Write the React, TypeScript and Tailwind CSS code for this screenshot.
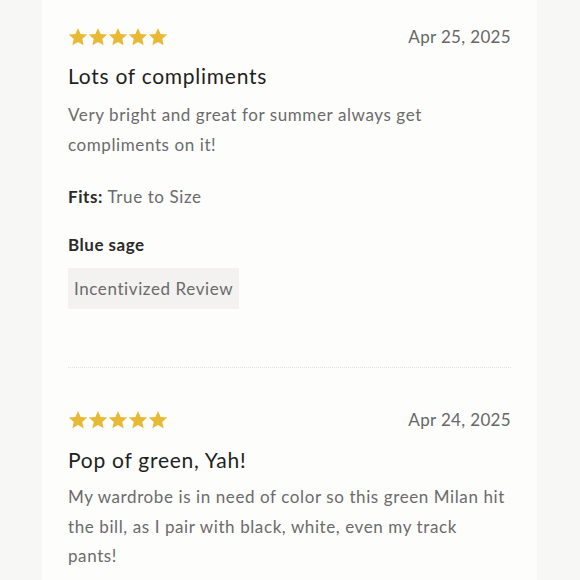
const font = { fontFamily: 'Lato, "Noto Sans", sans-serif' }

function Stars() {
  return (
    <div className="flex">
      {[0, 1, 2, 3, 4].map((i) => (
        <svg key={i} width="20" height="20" viewBox="0 0 24 24" className="text-[#e7b935]">
          <path
            fill="currentColor"
            d="M12 1.2l3.15 7.2 7.85.7-5.95 5.2 1.75 7.7L12 17.9l-6.8 4.1 1.75-7.7L1 9.1l7.85-.7z"
          />
        </svg>
      ))}
    </div>
  )
}

function ReviewHeader({ date }: { date: string }) {
  return (
    <div className="flex h-6 items-center justify-between">
      <Stars />
      <span className="text-[17px] tracking-[0.02em] text-[#676767]">{date}</span>
    </div>
  )
}

export default function App() {
  return (
    <div className="min-h-[580px] bg-[#f7f7f5] text-[#242424]" style={font}>
      <div className="ml-[42px] min-h-[580px] w-[495px] bg-[#fdfdfb] px-[26px] pt-[25px]">
        <ReviewHeader date="Apr 25, 2025" />
        <h3 className="mt-[13px] text-[21px] leading-[28px] tracking-[0.035em] text-[#1f1f1f]">
          Lots of compliments
        </h3>
        <p className="mt-[10px] max-w-[439px] text-[17px] leading-[30px] tracking-[0.035em] text-[#6b6b6b]">
          Very bright and great for summer always get compliments on it!
        </p>
        <p className="mt-[25px] text-[17px] leading-6 tracking-[0.035em] text-[#6b6b6b]">
          <span className="font-bold text-[#2a2a2a]">Fits:</span> True to Size
        </p>
        <p className="mt-[24px] text-[17px] leading-6 tracking-[0.03em] font-bold text-[#2a2a2a]">
          Blue sage
        </p>
        <div className="mt-[11px] inline-flex h-[41px] items-center bg-[#f3f2f0] px-[6px] text-[17px] tracking-[0.035em] text-[#6b6b6b]">
          Incentivized Review
        </div>
        <div className="mt-[58px] border-t border-dotted border-[#e2e2df]" />
        <div className="mt-[40px]">
          <ReviewHeader date="Apr 24, 2025" />
        </div>
        <h3 className="mt-[14px] text-[21px] leading-[28px] tracking-[0.035em] text-[#1f1f1f]">
          Pop of green, Yah!
        </h3>
        <p className="mt-[8px] max-w-[439px] text-[17px] leading-[29.5px] tracking-[0.035em] text-[#6b6b6b]">
          My wardrobe is in need of color so this green Milan hit the bill, as I pair with black,
          white, even my track pants!
        </p>
      </div>
    </div>
  )
}
